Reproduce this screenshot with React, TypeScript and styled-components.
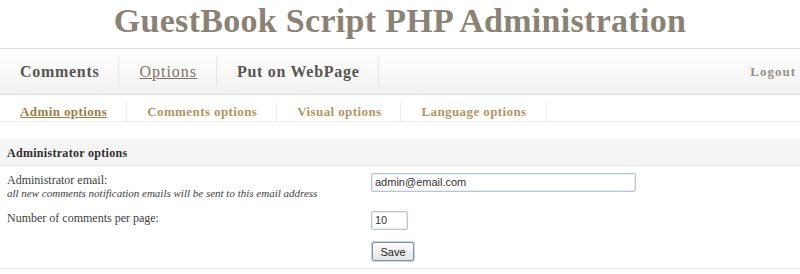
import React, { useState } from 'react';
import styled, { createGlobalStyle } from 'styled-components';

const GlobalStyle = createGlobalStyle`
  html, body {
    margin: 0;
    padding: 0;
    background: #ffffff;
  }
  body {
    font-family: 'Liberation Serif', 'DejaVu Serif', serif;
  }
`;

const Page = styled.div`
  width: 800px;
  height: 274px;
  overflow: hidden;
  background: #fff;
`;

const Title = styled.h1`
  margin: 2px 0 9px;
  height: 37px;
  line-height: 37px;
  text-align: center;
  font-family: 'Liberation Serif', serif;
  font-size: 34px;
  letter-spacing: 0.3px;
  font-weight: bold;
  color: #8b8274;
`;

const MainNav = styled.nav`
  display: flex;
  align-items: center;
  height: 45px;
  border-top: 1px solid #dedede;
  border-bottom: 1px solid #dcdcdc;
  background: linear-gradient(#ffffff, #f7f7f7 60%, #f0f0f0);
`;

interface NavItemProps {
  active?: boolean;
}

const NavItem = styled.a<NavItemProps>`
  display: flex;
  align-items: center;
  height: 30px;
  padding: 0 19px 0 20px;
  border-right: 1px solid #e6e6e6;
  font-size: 16px;
  letter-spacing: ${({ active }) => (active ? '1px' : '0.7px')};
  font-weight: ${({ active }) => (active ? 'normal' : 'bold')};
  color: ${({ active }) => (active ? '#7d7468' : '#58554f')};
  text-decoration: ${({ active }) => (active ? 'underline' : 'none')};
  cursor: pointer;
`;

const Logout = styled.a`
  margin-left: auto;
  padding-right: 4px;
  font-size: 13px;
  font-weight: bold;
  letter-spacing: 1px;
  color: #9a9186;
  cursor: pointer;
`;

const SubNav = styled.nav`
  display: flex;
  align-items: center;
  box-sizing: border-box;
  height: 27px;
  padding-top: 7px;
  border-bottom: 1px solid #eeeeee;
`;

const SubItem = styled.a<NavItemProps>`
  display: flex;
  align-items: center;
  height: 20px;
  padding: 0 19px 0 20px;
  border-right: 1px solid #f0f0f0;
  font-size: 13px;
  letter-spacing: 0.4px;
  font-weight: bold;
  color: ${({ active }) => (active ? '#9a7e48' : '#b0965f')};
  text-decoration: ${({ active }) => (active ? 'underline' : 'none')};
  cursor: pointer;
`;

const Section = styled.section`
  margin-top: 17px;
  border-bottom: 1px solid #ececec;
`;

const SectionHeader = styled.div`
  height: 26px;
  line-height: 28px;
  padding-left: 7px;
  background: #f5f5f5;
  border-bottom: 1px solid #eaeaea;
  font-size: 12px;
  letter-spacing: 0.3px;
  font-weight: bold;
  color: #2e2e2e;
`;

const Form = styled.form`
  display: grid;
  grid-template-columns: 364px 1fr;
  padding: 6px 0 7px 7px;
`;

const Label = styled.div`
  font-size: 12px;
  line-height: 13px;
  color: #3d3d3d;
  padding-top: 2px;
`;

const Hint = styled.div`
  font-size: 11px;
  font-style: italic;
  color: #3d3d3d;
`;

interface CellProps {
  gap: number;
}

const Cell = styled.div<CellProps>`
  padding-bottom: ${({ gap }) => gap}px;
`;

interface InputProps {
  w: number;
}

const TextInput = styled.input<InputProps>`
  box-sizing: border-box;
  width: ${({ w }) => w}px;
  height: 19px;
  padding: 0 3px;
  border: 1px solid #b7c6d6;
  border-radius: 2px;
  box-shadow: inset 0 0 0 1px #e6edf4;
  font-family: 'Liberation Sans', Arial, sans-serif;
  font-size: 11px;
  color: #333;
  outline: none;
`;

const SaveButton = styled.button`
  box-sizing: border-box;
  width: 42px;
  height: 19px;
  padding: 0;
  border: 1px solid #7f93a8;
  border-radius: 2px;
  background: linear-gradient(#fbfbfb, #e4e4e4);
  box-shadow: 0 0 0 1px #c6d4e2;
  font-family: 'Liberation Sans', Arial, sans-serif;
  font-size: 11px;
  color: #222;
  margin-left: 1px;
`;

const App: React.FC = () => {
  const [email, setEmail] = useState('admin@email.com');
  const [perPage, setPerPage] = useState('10');

  return (
    <Page>
      <GlobalStyle />
      <Title>GuestBook Script PHP Administration</Title>
      <MainNav>
        <NavItem>Comments</NavItem>
        <NavItem active>Options</NavItem>
        <NavItem>Put on WebPage</NavItem>
        <Logout>Logout</Logout>
      </MainNav>
      <SubNav>
        <SubItem active>Admin options</SubItem>
        <SubItem>Comments options</SubItem>
        <SubItem>Visual options</SubItem>
        <SubItem>Language options</SubItem>
      </SubNav>
      <Section>
        <SectionHeader>Administrator options</SectionHeader>
        <Form onSubmit={(e) => e.preventDefault()}>
          <Cell gap={11}>
            <Label>Administrator email:</Label>
            <Hint>all new comments notification emails will be sent to this email address</Hint>
          </Cell>
          <Cell gap={11}>
            <TextInput w={265} value={email} onChange={(e) => setEmail(e.target.value)} />
          </Cell>
          <Cell gap={12}>
            <Label>Number of comments per page:</Label>
          </Cell>
          <Cell gap={12}>
            <TextInput w={37} value={perPage} onChange={(e) => setPerPage(e.target.value)} />
          </Cell>
          <div />
          <div>
            <SaveButton type="submit">Save</SaveButton>
          </div>
        </Form>
      </Section>
    </Page>
  );
};

export default App;
